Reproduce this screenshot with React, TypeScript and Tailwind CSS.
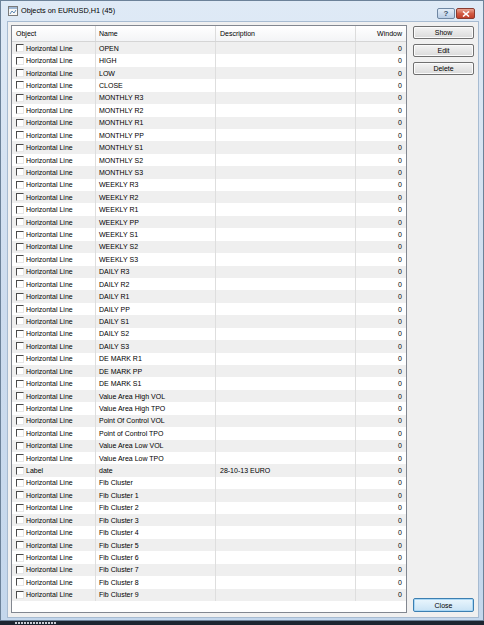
import React from "react";

type Row = { obj: string; name: string; desc: string };

const names = [
  "OPEN", "HIGH", "LOW", "CLOSE",
  "MONTHLY R3", "MONTHLY R2", "MONTHLY R1", "MONTHLY PP", "MONTHLY S1", "MONTHLY S2", "MONTHLY S3",
  "WEEKLY R3", "WEEKLY R2", "WEEKLY R1", "WEEKLY PP", "WEEKLY S1", "WEEKLY S2", "WEEKLY S3",
  "DAILY R3", "DAILY R2", "DAILY R1", "DAILY PP", "DAILY S1", "DAILY S2", "DAILY S3",
  "DE MARK R1", "DE MARK PP", "DE MARK S1",
  "Value Area High VOL", "Value Area High TPO", "Point Of Control VOL", "Point of Control TPO",
  "Value Area Low VOL", "Value Area Low TPO",
];

const rows: Row[] = [
  ...names.map((n) => ({ obj: "Horizontal Line", name: n, desc: "" })),
  { obj: "Label", name: "date", desc: "28-10-13 EURO" },
  { obj: "Horizontal Line", name: "Fib Cluster", desc: "" },
  ...[1, 2, 3, 4, 5, 6, 7, 8, 9].map((i) => ({ obj: "Horizontal Line", name: `Fib Cluster ${i}`, desc: "" })),
];

function Button({ label, primary }: { label: string; primary?: boolean }) {
  return (
    <div
      className={
        primary
          ? "flex h-[14px] w-[61px] items-center justify-center rounded-[2px] border border-[#3c7fb1] bg-gradient-to-b from-[#eaf6fd] to-[#c9e3f5] text-[7px] leading-none text-black shadow-[inset_0_0_0_1px_#a9d7f5]"
          : "flex h-[13px] w-[61px] items-center justify-center rounded-[2px] border border-[#707070] bg-gradient-to-b from-[#f4f4f4] to-[#dadada] text-[7px] leading-none text-black shadow-[inset_0_0_0_1px_#fbfbfb]"
      }
    >
      {label}
    </div>
  );
}

export default function App() {
  return (
    <div className="relative h-[625px] w-[484px] overflow-hidden bg-[#1c2530] font-['Liberation_Sans',Arial,sans-serif] text-black">
      <div className="flex h-[621px] flex-col border border-[#6c8299] bg-gradient-to-b from-[#dfeaf6] via-[#cddcee] to-[#c4d7ec]">
        {/* caption */}
        <div className="flex h-[21px] items-start">
          <svg width="10" height="10" viewBox="0 0 10 10" className="ml-[7px] mt-[5px]">
            <rect x="0.5" y="0.5" width="9" height="9" fill="#f7f7f7" stroke="#7a7a7a" />
            <rect x="1" y="1" width="8" height="2" fill="#9fb7d3" />
            <polyline points="2,8 4,5 6,7 8,4" fill="none" stroke="#3a6ea5" strokeWidth="0.8" />
          </svg>
          <div className="ml-[3px] mt-[5px] text-[7.3px] leading-[9px] text-black">Objects on EURUSD,H1 (45)</div>
          <div className="ml-auto mr-[8px] mt-[7px] flex gap-[1px]">
            <div className="flex h-[11px] w-[18px] items-center justify-center rounded-[2px] border border-[#6f87a3] bg-gradient-to-b from-[#e4eef9] to-[#b9cde5] text-[8px] font-bold leading-none text-[#3a4f6a]">
              ?
            </div>
            <div className="flex h-[11px] w-[19px] items-center justify-center rounded-[2px] border border-[#8a3b2f] bg-gradient-to-b from-[#e9a594] via-[#d25c45] to-[#c2402a]">
              <svg width="8" height="6" viewBox="0 0 8 6">
                <path d="M1 0.5 L7 5.5 M7 0.5 L1 5.5" stroke="#ffffff" strokeWidth="1.6" />
              </svg>
            </div>
          </div>
        </div>

        {/* client area */}
        <div className="ml-[7px] mr-[5px] flex h-[595px] gap-[6px] bg-[#f0f0f0] pl-[3px] pr-[4px] pt-[3px] shadow-[0_0_0_1px_#a7bbd1]">
          {/* list */}
          <div className="flex h-[588px] w-[396px] shrink-0 flex-col overflow-hidden border border-[#828790] bg-white">
            <div className="flex h-[16px] shrink-0 items-center border-b border-[#d5d5d5] bg-gradient-to-b from-[#ffffff] to-[#f3f4f6] text-[7px] leading-none">
              <div className="flex h-full w-[84px] items-center border-r border-[#dcdcdc] pl-[4px]">Object</div>
              <div className="flex h-full w-[120px] items-center border-r border-[#dcdcdc] pl-[3px]">Name</div>
              <div className="flex h-full w-[140px] items-center border-r border-[#dcdcdc] pl-[4px]">Description</div>
              <div className="flex h-full flex-1 items-center justify-end pr-[4px]">Window</div>
            </div>
            {rows.map((r, i) => (
              <div
                key={i}
                className={
                  "flex h-[12.43px] shrink-0 items-center text-[7px] leading-none text-black " +
                  (i % 2 === 0 ? "bg-[#efefef]" : "bg-white")
                }
              >
                <div className="flex h-full w-[84px] items-center gap-[2px] border-r border-[#dedede] pl-[4px]">
                  <div className="h-[8px] w-[8px] shrink-0 border border-t-[#4a4a4a] border-l-[#4a4a4a] border-r-[#e6e6e6] border-b-[#e6e6e6] bg-white" />
                  <div className="whitespace-nowrap">{r.obj}</div>
                </div>
                <div className="flex h-full w-[120px] items-center border-r border-[#dedede] pl-[3px]">{r.name}</div>
                <div className="flex h-full w-[140px] items-center border-r border-[#dedede] pl-[4px]">{r.desc}</div>
                <div className="flex h-full flex-1 items-center justify-end pr-[4px]">0</div>
              </div>
            ))}
          </div>

          {/* buttons */}
          <div className="flex h-[588px] flex-col justify-between pb-[1px] pt-[1px]">
            <div className="flex flex-col gap-[5px]">
              <Button label="Show" />
              <Button label="Edit" />
              <Button label="Delete" />
            </div>
            <Button label="Close" primary />
          </div>
        </div>
      </div>

      {/* strip below the window */}
      <div className="flex h-[4px] items-start gap-[1px] bg-[#1c2530] pl-[15px]">
        {Array.from({ length: 14 }).map((_, i) => (
          <div key={i} className="mt-[1px] h-[2px] w-[2px] bg-[#c9ced6]" />
        ))}
      </div>
    </div>
  );
}
